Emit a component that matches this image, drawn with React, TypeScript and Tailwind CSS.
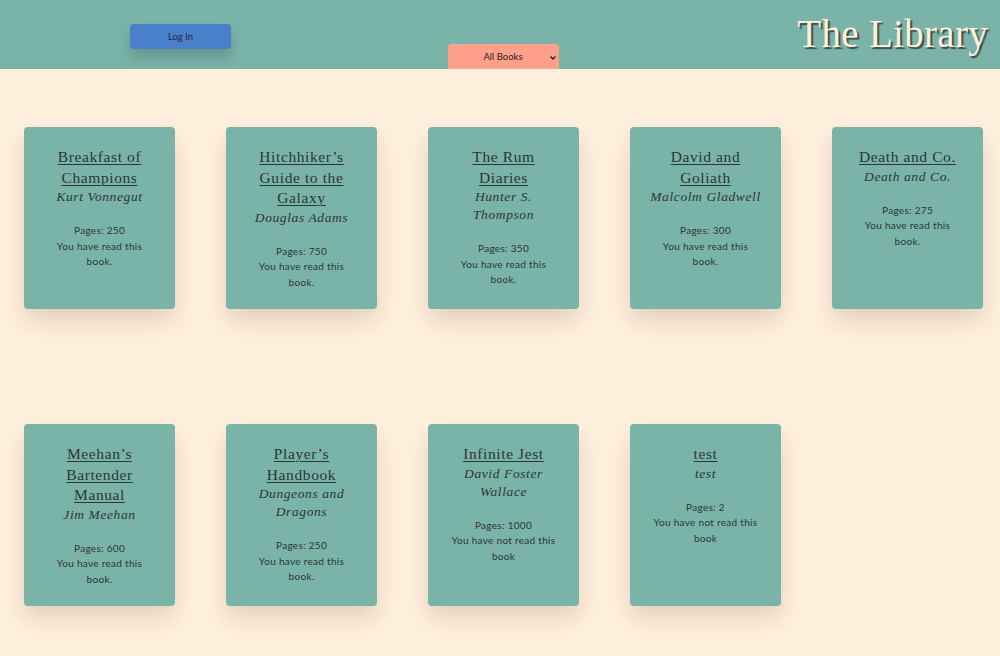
import React from 'react';

type Book = { title: string; author: string; pages: number; read: boolean };

const books: Book[] = [
  { title: 'Breakfast of Champions', author: 'Kurt Vonnegut', pages: 250, read: true },
  { title: 'Hitchhiker\u2019s Guide to the Galaxy', author: 'Douglas Adams', pages: 750, read: true },
  { title: 'The Rum Diaries', author: 'Hunter S. Thompson', pages: 350, read: true },
  { title: 'David and Goliath', author: 'Malcolm Gladwell', pages: 300, read: true },
  { title: 'Death and Co.', author: 'Death and Co.', pages: 275, read: true },
  { title: 'Meehan\u2019s Bartender Manual', author: 'Jim Meehan', pages: 600, read: true },
  { title: 'Player\u2019s Handbook', author: 'Dungeons and Dragons', pages: 250, read: true },
  { title: 'Infinite Jest', author: 'David Foster Wallace', pages: 1000, read: false },
  { title: 'test', author: 'test', pages: 2, read: false },
];

const serif = { fontFamily: '"Liberation Serif", "DejaVu Serif", serif' };

function Card({ book }: { book: Book }) {
  return (
    <div className="w-[151px] h-[182px] bg-[#7ab3a8] rounded-[4px] shadow-[0_12px_24px_rgba(120,90,60,0.22)] px-[22px] pt-[20px] text-center text-[#2a3735]">
      <h2 className="text-[15.5px] leading-[20.5px] tracking-[0.6px] underline underline-offset-2 decoration-1" style={serif}>
        {book.title}
      </h2>
      <p className="-mx-[5px] italic text-[13.5px] leading-[18px] tracking-[0.6px]" style={serif}>
        {book.author}
      </p>
      <div className="mt-[17px] -mx-[2px] text-[10px] leading-[15.5px] tracking-[0.3px] font-['Lato',sans-serif]">
        <p>Pages: {book.pages}</p>
        <p>{book.read ? 'You have read this book.' : 'You have not read this book'}</p>
      </div>
    </div>
  );
}

export default function App() {
  return (
    <div className="min-h-[656px] bg-[#fff0de] font-['Lato',sans-serif]">
      <header className="h-[69px] bg-[#7ab3a8] flex items-start">
        <button className="mt-[24px] ml-[130px] w-[101px] h-[25px] pt-[2px] bg-[#4a80c9] rounded-[4px] text-[9.5px] text-[#1f2a3a] shadow-[0_8px_12px_rgba(40,70,70,0.25)]">
          Log In
        </button>
        <div className="mt-[44px] ml-[217px] w-[111px] h-[25px] pt-[2px] bg-[#ffa08a] rounded-t-[4px] flex items-center text-[9.5px] text-[#2a2020]">
          <span className="flex-1 text-center pl-[9px]">All Books</span>
          <svg width="8" height="6" viewBox="0 0 8 6" className="mr-[2px]">
            <path d="M1.5 1.5 L4 4 L6.5 1.5" fill="none" stroke="#222" strokeWidth="1.4" />
          </svg>
        </div>
        <h1
          className="ml-auto mr-[12px] mt-[10px] text-[39px] leading-[48px] tracking-[0.3px] text-[#fdf0dd] [text-shadow:2px_2px_1px_#3d4a47]"
          style={serif}
        >
          The Library
        </h1>
      </header>
      <main className="grid grid-cols-5 gap-x-[51px] gap-y-[115px] pl-[24px] pt-[58px] pb-10 w-fit">
        {books.map((b, i) => (
          <Card key={i} book={b} />
        ))}
      </main>
    </div>
  );
}
